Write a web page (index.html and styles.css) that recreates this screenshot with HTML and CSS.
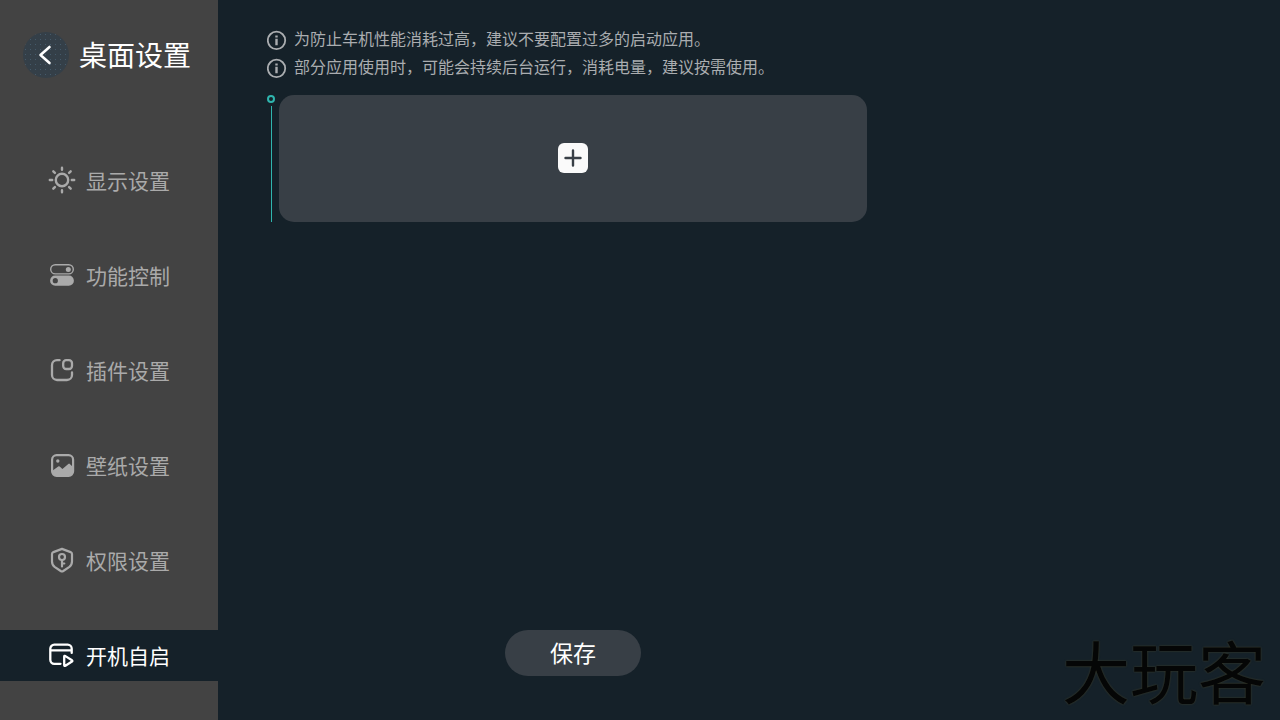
FILE: index.html
```html
<!DOCTYPE html>
<html lang="zh-CN">
<head>
<meta charset="utf-8">
<meta name="viewport" content="width=device-width, initial-scale=1">
<title>桌面设置</title>
<link rel="stylesheet" href="styles.css">
</head>
<body>
<div class="app">
  <aside class="sidebar">
    <header class="sidebar-header">
      <button class="back" type="button" aria-label="返回">
        <svg width="46" height="46" viewBox="0 0 46 46" fill="none" stroke="#fff" stroke-width="2.600" stroke-linecap="round" stroke-linejoin="round"><path d="M26.500 15L17.500 23L26.500 31"/></svg>
      </button>
      <h1 class="title">桌面设置</h1>
    </header>
    <nav class="nav">
      <a class="nav-item" href="#display">
        <svg class="icon" viewBox="0 0 28 28" fill="none" stroke="currentColor" stroke-width="2.4" stroke-linecap="round"><circle cx="14" cy="14" r="6.200"/><path d="M14 1.800v2M14 24.200v2M1.800 14h2.400M23.800 14h2.400M5.300 5.300l1.600 1.600M21.100 21.100l1.600 1.600M5.300 22.700l1.600-1.600M21.100 6.900l1.600-1.600"/></svg>
        <span>显示设置</span>
      </a>
      <a class="nav-item" href="#features">
        <svg class="icon" viewBox="0 0 28 28"><rect x="2.700" y="3.700" width="22.600" height="9.200" rx="4.600" fill="none" stroke="currentColor" stroke-width="1.400"/><circle cx="20.300" cy="8.400" r="2.500" fill="currentColor"/><path fill="currentColor" fill-rule="evenodd" d="M7.200 14.600h13.600a5.100 5.100 0 0 1 0 10.200H7.200a5.100 5.100 0 0 1 0-10.200zM7.300 17.100a2.600 2.600 0 1 0 0 5.200a2.600 2.600 0 0 0 0-5.200z"/></svg>
        <span>功能控制</span>
      </a>
      <a class="nav-item" href="#widgets">
        <svg class="icon" viewBox="0 0 28 28" fill="none" stroke="currentColor" stroke-width="2.300" stroke-linecap="round"><path d="M11.600 4.200H9a5 5 0 0 0-5 5V19a5 5 0 0 0 5 5h10a5 5 0 0 0 5-5v-2.600"/><rect x="15.200" y="4.200" width="8.800" height="8.800" rx="3"/></svg>
        <span>插件设置</span>
      </a>
      <a class="nav-item" href="#wallpaper">
        <svg class="icon" viewBox="0 0 28 28"><rect x="4.100" y="4.200" width="21" height="20.600" rx="4.500" fill="none" stroke="currentColor" stroke-width="2.200"/><circle cx="9.800" cy="10" r="1.700" fill="currentColor"/><path fill="currentColor" d="M4 20l6.200-4.600q.8-.5 1.500.2l2.700 2.500 5.900-5.200q.8-.7 1.500 0L25 16v5q0 3.800-4 3.800H8q-4 0-4-3.800z"/></svg>
        <span>壁纸设置</span>
      </a>
      <a class="nav-item" href="#permissions">
        <svg class="icon" viewBox="0 0 28 28" fill="none" stroke="currentColor" stroke-width="2.200" stroke-linecap="round" stroke-linejoin="round"><path d="M14 2.900l8.600 3.200q1.400.6 1.400 2v7.400q0 3.300-2.600 5.300L15.300 25q-1.300.8-2.600 0l-6.100-4.200Q4 18.800 4 15.500V8.100q0-1.400 1.400-2z"/><circle cx="14" cy="11" r="3"/><path d="M14 14.200v6.300M14 17.500h2.300"/></svg>
        <span>权限设置</span>
      </a>
      <a class="nav-item active" href="#autostart" aria-current="page">
        <svg class="icon" viewBox="0 0 28 28" fill="none" stroke="currentColor" stroke-width="2.300" stroke-linecap="round" stroke-linejoin="round"><path d="M12.500 22.800H6.300a4 4 0 0 1-4-4V7.700a4 4 0 0 1 4-4h13.400a4 4 0 0 1 4 4v4.200M2.500 9.400h21"/><path d="M16.200 15.600v8.500q.1 1.200 1.200.6l6.600-4.200q.8-.6 0-1.200l-6.600-4.200q-1.100-.6-1.200.5z"/></svg>
        <span>开机自启</span>
      </a>
    </nav>
  </aside>
  <main class="content">
    <ul class="notices">
      <li class="notice">
        <svg class="info" viewBox="0 0 20 20" fill="none" stroke="currentColor"><circle cx="9.500" cy="10.400" r="8.700" stroke-width="1.800"/><path d="M9.500 8.800v6.400M9.500 5.600v2" stroke-width="2.400"/></svg>
        <span class="notice-text">为防止车机性能消耗过高，建议不要配置过多的启动应用。</span>
      </li>
      <li class="notice">
        <svg class="info" viewBox="0 0 20 20" fill="none" stroke="currentColor"><circle cx="9.500" cy="10.400" r="8.700" stroke-width="1.800"/><path d="M9.500 8.800v6.400M9.500 5.600v2" stroke-width="2.400"/></svg>
        <span class="notice-text">部分应用使用时，可能会持续后台运行，消耗电量，建议按需使用。</span>
      </li>
    </ul>
    <section class="step">
      <div class="timeline"><span class="dot"></span><span class="line"></span></div>
      <div class="card">
        <button class="add" type="button" aria-label="添加应用">
          <svg width="30" height="30" viewBox="0 0 30 30" fill="none" stroke="#383f46" stroke-width="2.400" stroke-linecap="round"><path d="M7.500 15h15M15 7.500v15"/></svg>
        </button>
      </div>
    </section>
    <footer class="actions"><button class="save" type="button">保存</button></footer>
  </main>
  <div class="watermark">大玩客</div>
</div>
</body>
</html>
```
FILE: styles.css
```css
* {
  box-sizing: border-box;
}

body {
  margin: 0;
  background: #152129;
  font-family: "Noto Sans CJK SC", "Noto Sans", sans-serif;
}

button {
  padding: 0;
  border: 0;
  font: inherit;
  cursor: pointer;
}

svg {
  display: block;
  flex: none;
}

.app {
  position: relative;
  display: flex;
  min-height: 100vh;
}

.sidebar {
  flex: none;
  width: 218px;
  background: #434343;
}

.sidebar-header {
  display: flex;
  align-items: flex-start;
  gap: 10px;
  padding: 32px 0 0 23px;
}

.back {
  border-radius: 50%;
  background: radial-gradient(circle, #455a6a 0, transparent 1px) 0 0 / 5px 5px, #343f48;
}

.title {
  margin: 0;
  color: #fff;
  font-size: 28px;
  font-weight: 400;
  line-height: 44px;
}

.nav {
  display: flex;
  flex-direction: column;
  gap: 44px;
  padding: 77px 0 39px;
}

.nav-item {
  display: flex;
  align-items: center;
  gap: 10px;
  height: 51px;
  padding: 0 0 2px 48px;
  color: #aaa;
  font-size: 21px;
  line-height: 30px;
  text-decoration: none;
}

.nav-item.active {
  background: #152129;
  color: #fff;
}

.icon {
  width: 28px;
  height: 28px;
}

.content {
  flex: 1;
  display: flex;
  flex-direction: column;
  padding: 26px 48px 44px;
}

.notices {
  margin: 0;
  padding: 0;
  list-style: none;
}

.notice {
  display: flex;
  align-items: center;
  gap: 7px;
  padding-left: 1px;
  color: #aaadb0;
  font-size: 16px;
}

.notice-text {
  padding-bottom: 4px;
  line-height: 24px;
}

.info {
  width: 20px;
  height: 20px;
}

.step {
  display: flex;
  gap: 4px;
  max-width: 601px;
  margin-top: 13px;
}

.timeline {
  display: flex;
  flex-direction: column;
  gap: 3px;
  width: 9px;
  padding-left: 1px;
}

.dot {
  width: 8px;
  height: 8px;
  border: 2px solid #2fb5ae;
  border-radius: 50%;
}

.line {
  flex: 1;
  width: 1px;
  margin-left: 4px;
  background: #2fb5ae;
}

.card {
  flex: 1;
  display: flex;
  align-items: center;
  justify-content: center;
  min-height: 127px;
  padding-bottom: 2px;
  border-radius: 15px;
  background: #383f46;
}

.add {
  border-radius: 6px;
  background: #fafafa;
}

.actions {
  display: flex;
  justify-content: center;
  max-width: 614px;
  margin-top: auto;
}

.save {
  padding: 0 45px 2px;
  border-radius: 23px;
  background: #383f46;
  color: #fff;
  font-size: 23px;
  line-height: 44px;
}

.watermark {
  position: absolute;
  right: 14px;
  bottom: 1px;
  color: #050606;
  font-size: 68px;
  line-height: 98px;
  text-shadow: 0 0 2px #45442c;
}
```
